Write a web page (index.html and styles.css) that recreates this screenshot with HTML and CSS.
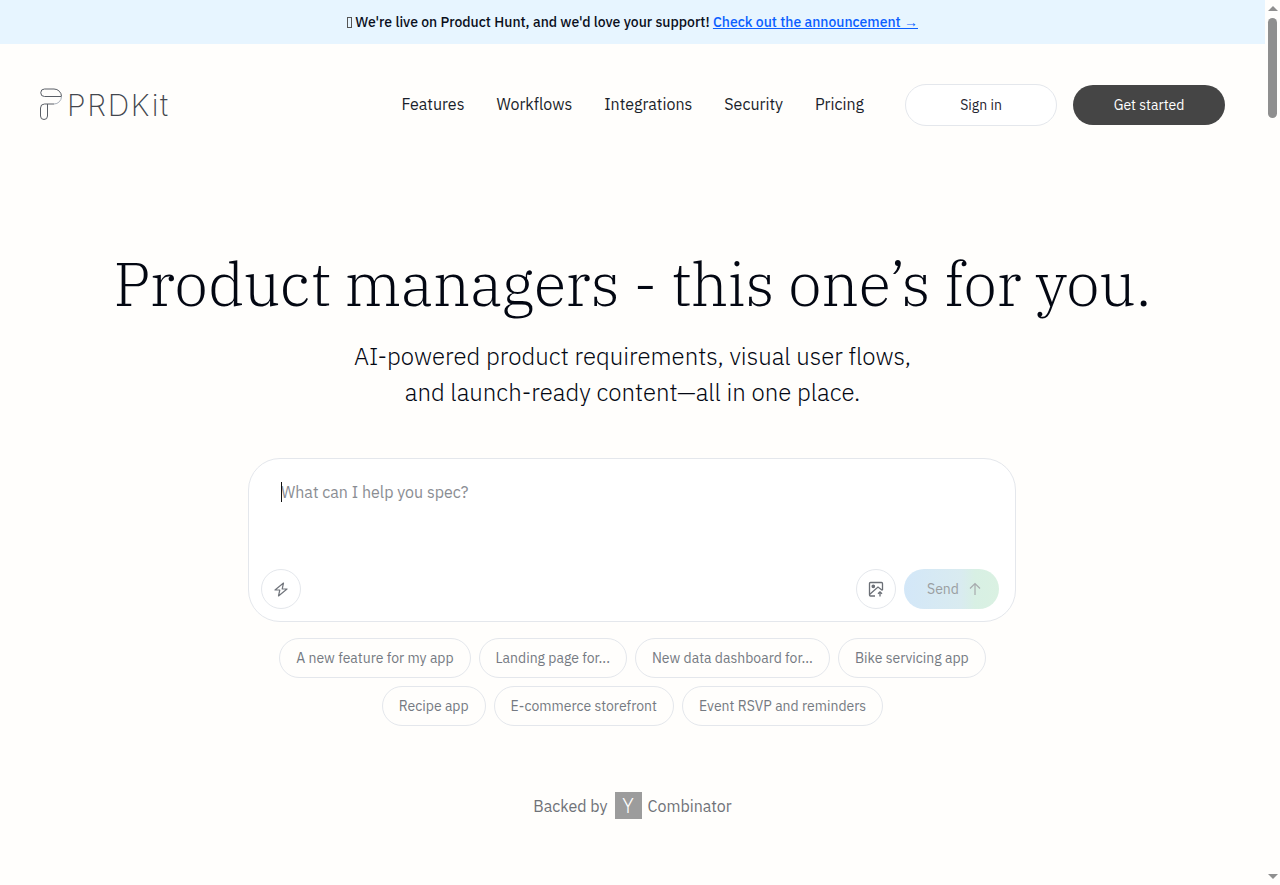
FILE: index.html
```html
<!DOCTYPE html>
<html lang="en">
<head>
<meta charset="utf-8">
<title>PRDKit</title>
<link rel="stylesheet" href="styles.css">
</head>
<body>
<div class="banner"><span class="tofu"></span> We're live on Product Hunt, and we'd love your support! <a href="#">Check out the announcement <span class="arrow">→</span></a></div>
<header class="nav">
  <a class="logo" href="#">
    <svg class="logo-mark" width="22" height="33" viewBox="0 0 22 33" fill="none" stroke-width="1">
      <path stroke="#5a5f66" d="M4.500 1H14a7.500 7.500 0 0 1 7.500 7.500"/>
      <path stroke="#5a5f66" d="M4.500 1a3.750 3.750 0 0 0 0 7.500H21.500"/>
      <path stroke="#a9b0ba" d="M21.500 8.500a7.500 7.500 0 0 1-7.500 7.500"/>
      <path stroke="#5a5f66" d="M14 16H4.500a4 4 0 0 0-4 4v8a3.500 3.500 0 0 0 7 0V16"/>
    </svg>
    <span class="logo-text">PRDKit</span>
  </a>
  <nav class="links">
    <a href="#">Features</a>
    <a href="#">Workflows</a>
    <a href="#">Integrations</a>
    <a href="#">Security</a>
    <a href="#">Pricing</a>
  </nav>
  <div class="actions">
    <a class="btn btn-light" href="#">Sign in</a>
    <a class="btn btn-dark" href="#">Get started</a>
  </div>
</header>
<main class="hero">
  <h1>Product managers - this one’s for you.</h1>
  <p class="sub">AI-powered product requirements, visual user flows,<br>and launch-ready content—all in one place.</p>
  <form class="prompt">
    <div class="input"><span class="caret"></span>What can I help you spec?</div>
    <div class="tools">
      <button type="button" class="round" aria-label="Enhance">
        <svg width="14" height="15" viewBox="0 0 14 15" fill="none" stroke="#71757c" stroke-width="1.200" stroke-linejoin="round"><path d="M9.500 1 1 8h4.800L4.500 14 13 7H8.200z"/></svg>
      </button>
      <div class="tools-right">
        <button type="button" class="round" aria-label="Add image">
          <svg width="16" height="16" viewBox="0 0 16 16" fill="none" stroke="#6b6f76" stroke-width="1.300"><path d="M7 15H2.500a1 1 0 0 1-1-1V2.500a1 1 0 0 1 1-1h11a1 1 0 0 1 1 1V9"/><circle cx="5.300" cy="5.300" r="1.200" fill="#6b6f76"/><path d="m1.500 13.500 8.500-7.500 4.500 3.500"/><path d="M12 15.500V10.800M10 12.800l2-2 2 2"/></svg>
        </button>
        <button type="button" class="send">Send
          <svg width="14" height="14" viewBox="0 0 14 14" fill="none" stroke="#a7abae" stroke-width="1.200"><path d="M7 13V1.500M2 6.500l5-5 5 5"/></svg>
        </button>
      </div>
    </div>
  </form>
  <div class="chips">
    <a href="#">A new feature for my app</a>
    <a href="#">Landing page for...</a>
    <a href="#">New data dashboard for...</a>
    <a href="#">Bike servicing app</a>
    <a href="#">Recipe app</a>
    <a href="#">E-commerce storefront</a>
    <a href="#">Event RSVP and reminders</a>
  </div>
  <div class="backed">Backed by <span class="yc">Y</span> Combinator</div>
</main>
<div class="scrollbar" aria-hidden="true">
  <span class="sb-up"></span>
  <span class="sb-thumb"></span>
  <span class="sb-down"></span>
</div>
</body>
</html>
```
FILE: styles.css
```css
* { box-sizing: border-box; }
html, body { margin: 0; padding: 0; }
html { background: #fffefc; }
body {
  margin-right: 15px;
  background: #fffefc;
  color: #030712;
  font-family: "IBM Plex Sans", "Noto Sans", sans-serif;
}
a { color: inherit; text-decoration: none; }
.banner {
  height: 44px;
  background: #e7f5ff;
  text-align: center;
  line-height: 44px;
  font-size: 14px;
  font-weight: 500;
  color: #0a0f1c;
}
.tofu {
  display: inline-block;
  width: 5px;
  height: 11px;
  border: 1px solid #555;
  vertical-align: -1px;
}
.banner a { color: #0b5fff; text-decoration: underline; }
.arrow { font-family: "Liberation Sans", sans-serif; font-weight: 400; }
.nav {
  height: 121px;
  display: flex;
  align-items: center;
  padding: 0 40px;
}
.logo { display: flex; align-items: center; gap: 5px; }
.logo-mark { display: block; }
.logo-text {
  font-size: 30px;
  font-weight: 250;
  letter-spacing: 1.700px;
  color: #43474e;
  font-family: "Inter", sans-serif;
}
.links {
  margin-left: auto;
  padding-bottom: 2px;
  display: flex;
  gap: 32px;
  font-size: 16px;
  color: #1a1f2b;
}
.actions { display: flex; gap: 16px; margin-left: 41px; }
.btn {
  width: 152px;
  height: 40px;
  border-radius: 21px;
  display: flex;
  align-items: center;
  justify-content: center;
  font-size: 14px;
}
.btn-light { background: #fff; border: 1px solid #e4e7ec; height: 42px; color: #1f2430; }
.btn-dark { background: #454545; color: #fff; margin-top: 1px; }
.hero { display: flex; flex-direction: column; align-items: center; padding-top: 79px; }
h1 {
  margin: 0;
  font-family: "IBM Plex Serif", "Liberation Serif", serif;
  font-size: 60px;
  line-height: 80px;
  font-weight: 300;
  color: #030712;
}
.sub {
  margin: 14px 0 0;
  text-align: center;
  font-size: 24px;
  line-height: 36px;
  font-weight: 300;
  color: #030712;
}
.prompt {
  margin: 48px 1px 0 0;
  width: 768px;
  height: 164px;
  background: #fff;
  border: 1px solid #e4e7ec;
  border-radius: 32px;
  padding: 20px 16px 12px 12px;
  display: flex;
  flex-direction: column;
  justify-content: space-between;
}
.input {
  position: relative;
  padding-left: 20px;
  font-size: 16px;
  line-height: 26px;
  color: #8a8d93;
}
.caret { position: absolute; left: 20px; top: 3px; width: 1px; height: 20px; background: #111; }
.tools { display: flex; justify-content: space-between; align-items: center; }
.tools-right { display: flex; gap: 8px; }
.round {
  width: 40px;
  height: 40px;
  padding: 0;
  border-radius: 50%;
  border: 1px solid #e4e7ec;
  background: #fff;
  display: flex;
  align-items: center;
  justify-content: center;
}
.send {
  width: 95px;
  height: 40px;
  border: 0;
  border-radius: 20px;
  padding: 0 0 0 6px;
  background: linear-gradient(90deg, #d3e7f8 0%, #d9ebf0 60%, #d8f0e4 75%, #daf1e2 100%);
  color: #9a9ea1;
  font: inherit;
  font-size: 14px;
  display: flex;
  align-items: center;
  justify-content: center;
  gap: 9px;
}
.chips {
  margin-top: 16px;
  width: 768px;
  display: flex;
  flex-wrap: wrap;
  justify-content: center;
  gap: 8px;
}
.chips a {
  height: 40px;
  padding: 0 16px;
  border: 1px solid #e4e7ec;
  border-radius: 20px;
  display: flex;
  align-items: center;
  font-size: 14px;
  color: #757a82;
}
.backed {
  margin-top: 66px;
  display: flex;
  align-items: center;
  gap: 6px;
  font-size: 16px;
  color: #6f7278;
}
.yc {
  width: 27px;
  height: 27px;
  margin-left: 1px;
  background: #9c9c9c;
  color: #fff;
  display: flex;
  align-items: center;
  justify-content: center;
  font-size: 20px;
  font-weight: 300;
}
.scrollbar {
  position: fixed;
  top: 0;
  right: 0;
  bottom: 0;
  width: 15px;
  padding: 6px 0;
  display: flex;
  flex-direction: column;
  align-items: center;
  background: #fffefc;
}
.sb-up, .sb-down {
  width: 0;
  height: 0;
  border-left: 5px solid transparent;
  border-right: 5px solid transparent;
}
.sb-up { border-bottom: 5px solid #8f8f8f; }
.sb-down { border-top: 5px solid #8f8f8f; margin-top: auto; }
.sb-thumb {
  width: 9px;
  height: 100px;
  margin-top: 7px;
  border-radius: 5px;
  background: #8f8f8f;
}
```
